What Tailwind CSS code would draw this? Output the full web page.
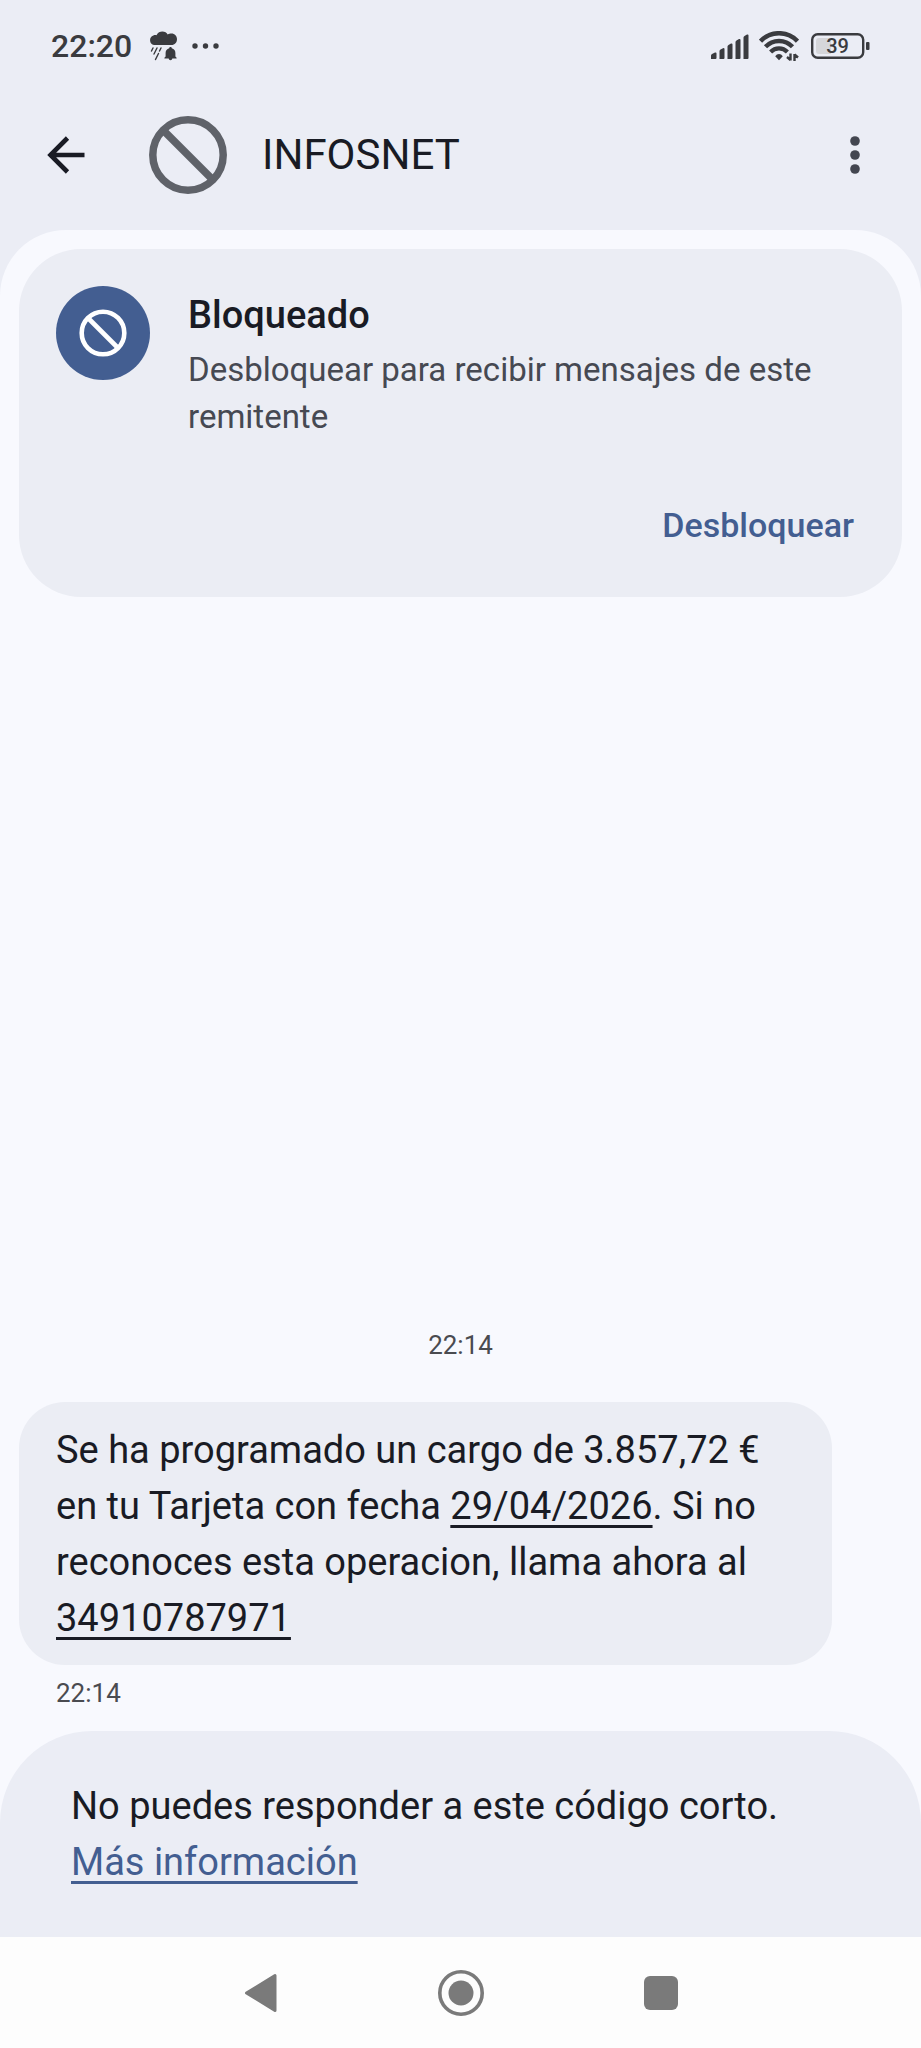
<!DOCTYPE html>
<html lang="es">
<head>
  <meta charset="UTF-8">
  <meta name="viewport" content="width=device-width, initial-scale=1.0">
  <title>INFOSNET</title>
  <script src="https://cdn.jsdelivr.net/npm/@tailwindcss/browser@4"></script>
</head>
<body class="flex flex-col min-h-screen bg-[#ebedf5] text-[#191b24] font-['Roboto',sans-serif]">

  <!-- Status bar -->
  <div class="flex items-center justify-between h-[92px] pl-[51px] pr-[50px] text-[#3a3b3f]">
    <div class="flex items-center">
      <span class="text-[32px] leading-10 font-medium">22:20</span>
      <svg class="ml-4 w-[30px] h-[30px]" viewBox="0 0 30 30" fill="currentColor">
        <path d="M6 14a5 5 0 0 1-.6-9.6C6.500 4 7.500 4 8.500 4.200 9.800 1.500 12 .6 14.300.6c2.600 0 4.400 1.300 5.400 2.900 1-.8 2.400-1.100 3.700-1.100 3.400 0 5.600 2.500 5.600 5.600 0 3.500-2.200 6-5.600 6z"/>
        <path d="M22.500 16c.8 0 1.200.5 1.300 1.200 2.300.6 3.600 2.400 3.600 4.700v3.600l1.200 1.300v.8h-4.300c-.2 1-.8 1.600-1.800 1.600s-1.600-.6-1.800-1.600h-4.300v-.8l1.200-1.300v-3.600c0-2.300 1.300-4.100 3.600-4.700.1-.7.5-1.200 1.300-1.200z"/>
        <path d="M5 17l-1.500 3M9 17l-3 6M13 17l-1.500 3M10.500 22.500l-3 6" fill="none" stroke="currentColor" stroke-width="1.400" stroke-linecap="round"/>
      </svg>
      <svg class="ml-[14px] w-7 h-[6px]" viewBox="0 0 28 6" fill="currentColor">
        <circle cx="3" cy="3" r="2.700"/><circle cx="13.500" cy="3" r="2.700"/><circle cx="24" cy="3" r="2.700"/>
      </svg>
    </div>
    <div class="flex items-center">
      <svg class="w-[38px] h-[25px]" viewBox="0 0 38 25" fill="currentColor">
        <path d="M0 25v-3.500q0-1 1-1.500l3-1.500q1.500-.5 1.500 1v4.500q0 1-1 1zM8.500 25v-8q0-1 1-1.500l2.500-1.300q1.500-.5 1.500 1V24q0 1-1 1zM16.500 25V12.500q0-1 1-1.500l2.500-1.500q1.500-.5 1.500 1V24q0 1-1 1zM24.500 25V8q0-1 1-1.500L28 5q1.500-.5 1.500 1v18q0 1-1 1zM32.500 25V3.500q0-1 1-1.500L36 .6q1.500-.5 1.500 1V24q0 1-1 1z"/>
      </svg>
      <svg class="ml-[10px] w-10 h-[30px]" viewBox="0 0 40 30" fill="none" stroke="currentColor">
        <path d="M1.500 10.200a25.500 25.500 0 0 1 37 0" stroke-width="4.600"/>
        <path d="M6.500 15.800a18.500 18.500 0 0 1 27 0" stroke-width="4.400"/>
        <path d="M11.600 21a11.600 11.600 0 0 1 16.800 0" stroke-width="4.200"/>
        <path d="M20 29.200l-3.800-4q1.500-2.200 3.800-2.200t3.800 2.200z" fill="currentColor" stroke="none"/>
        <path d="M31.500 22.500v7M31.500 29l-3.500-3M35.500 30v-7M35.500 23.500l3.500 3" stroke-width="2.400"/>
      </svg>
      <div class="relative ml-3 w-[60px] h-[26px]">
        <svg class="w-[60px] h-[26px]" viewBox="0 0 60 26" fill="none">
          <rect x="1.200" y="1.200" width="51" height="23.600" rx="5.500" stroke="currentColor" stroke-width="2.400"/>
          <path d="M8 5h12v16H8q-3 0-3-3V8q0-3 3-3z" fill="#d5d6da"/>
          <rect x="55" y="9" width="3.500" height="8" rx="1" fill="currentColor"/>
        </svg>
        <span class="absolute inset-y-0 left-0 w-[53px] text-center text-[20px] leading-[27px] font-medium">39</span>
      </div>
    </div>
  </div>

  <!-- App bar -->
  <header class="flex items-center h-[126px] mb-3 pl-[46px] pr-11">
    <button type="button" aria-label="Atrás">
      <svg class="w-10 h-10" viewBox="0 0 40 40" fill="none" stroke="currentColor" stroke-width="4.600">
        <path d="M21.500 3L4.500 20l17 17M4 20h34.500"/>
      </svg>
    </button>
    <svg class="ml-[62px] w-20 h-20 text-[#5f6269]" viewBox="0 0 80 80" fill="none" stroke="currentColor" stroke-width="7.500">
      <circle cx="40" cy="40" r="35.200"/>
      <path d="M15 15l50 50"/>
    </svg>
    <h1 class="ml-[34px] text-[42px] leading-14">INFOSNET</h1>
    <button type="button" class="ml-auto" aria-label="Más opciones">
      <svg class="w-11 h-10 text-[#434650]" viewBox="0 0 44 40" fill="currentColor">
        <circle cx="22" cy="6" r="4.800"/><circle cx="22" cy="20" r="4.800"/><circle cx="22" cy="34" r="4.800"/>
      </svg>
    </button>
  </header>

  <main class="flex flex-col grow bg-[#f8f9fe] rounded-t-[66px] pt-[19px]">

    <!-- Blocked sender card -->
    <section class="mx-[19px] rounded-[62px] bg-[#ebedf4] px-[37px] pt-[37px] pb-12">
      <div class="flex items-start gap-[38px]">
        <div class="flex items-center justify-center shrink-0 w-[94px] h-[94px] rounded-full bg-[#435e91] text-white">
          <svg class="w-12 h-12" viewBox="0 0 48 48" fill="none" stroke="currentColor" stroke-width="4.600">
            <circle cx="24" cy="24" r="21.300"/>
            <path d="M9 9l30 30"/>
          </svg>
        </div>
        <div>
          <h2 class="mb-[2px] text-[38px] leading-[58px] font-medium">Bloqueado</h2>
          <p class="text-[33px] leading-[47px] text-[#464952]">Desbloquear para recibir mensajes de este remitente</p>
        </div>
      </div>
      <div class="flex justify-end mt-[62px] pr-[11px]">
        <button type="button" class="text-[34px] leading-[47px] font-medium text-[#435e91]">Desbloquear</button>
      </div>
    </section>

    <!-- Conversation -->
    <section class="flex flex-col grow justify-end px-[19px] pb-[18px]">
      <p class="text-center text-[26px] leading-10 text-[#4a4b50]">22:14</p>
      <div class="mt-[37px] mr-[70px] rounded-[46px] bg-[#ebedf4] px-[37px] pt-5 pb-[19px]">
        <p class="text-[38px] leading-14">Se ha programado un cargo de 3.857,72 € en tu Tarjeta con fecha <a href="#" class="underline decoration-3 underline-offset-6">29/04/2026</a>. Si no reconoces esta operacion, llama ahora al <a href="tel:34910787971" class="underline decoration-3 underline-offset-6">34910787971</a></p>
      </div>
      <p class="mt-2 pl-[37px] text-[26px] leading-10 text-[#4a4b50]">22:14</p>
    </section>

    <footer class="rounded-t-[92px] bg-[#ebedf5] px-[71px] py-[47px] text-[38px] leading-14">
      <p>No puedes responder a este código corto.</p>
      <a href="#" class="block w-fit text-[#435e91] underline decoration-3 underline-offset-6">Más información</a>
    </footer>
  </main>

  <!-- System navigation -->
  <nav class="flex items-center justify-center h-[111px] bg-[#fdfdfd] text-[#7a7a7a]">
    <button type="button" class="flex justify-center w-[200px]" aria-label="Atrás">
      <svg class="w-12 h-12" viewBox="0 0 48 48" fill="currentColor" stroke="currentColor" stroke-width="3" stroke-linejoin="round">
        <path d="M9.500 24L38 6.500v35z"/>
      </svg>
    </button>
    <button type="button" class="flex justify-center w-[200px]" aria-label="Inicio">
      <svg class="w-12 h-12" viewBox="0 0 48 48" fill="none" stroke="currentColor" stroke-width="3.600">
        <circle cx="24" cy="24" r="21.200"/>
        <circle cx="24" cy="24" r="12.500" fill="currentColor" stroke="none"/>
      </svg>
    </button>
    <button type="button" class="flex justify-center w-[200px]" aria-label="Recientes">
      <svg class="w-12 h-12" viewBox="0 0 48 48" fill="currentColor">
        <rect x="7" y="7" width="34" height="34" rx="6"/>
      </svg>
    </button>
  </nav>
</body>
</html>
